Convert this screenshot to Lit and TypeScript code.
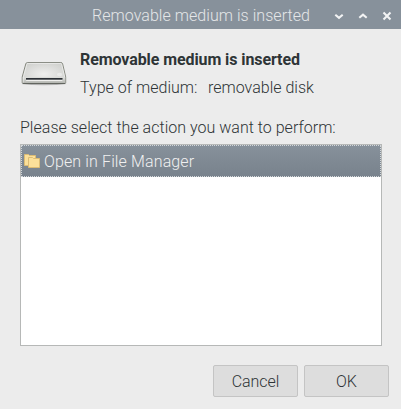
import { LitElement, html, css, svg } from "lit";
import { customElement } from "lit/decorators.js";

@customElement("drive-icon")
class DriveIcon extends LitElement {
  static styles = css`
    :host { display: block; width: 48px; height: 48px; }
    svg { display: block; }
  `;
  render() {
    return html`<svg width="48" height="48" viewBox="0 0 48 48">
      <defs>
        <radialGradient id="top" cx="0.5" cy="0.55" r="0.6">
          <stop offset="0" stop-color="#efefee" />
          <stop offset="1" stop-color="#d0d1ce" />
        </radialGradient>
        <linearGradient id="front" x1="0" y1="0" x2="0" y2="1">
          <stop offset="0" stop-color="#dfe0dd" />
          <stop offset="1" stop-color="#b4b6b1" />
        </linearGradient>
        <radialGradient id="shade">
          <stop offset="0.6" stop-color="#000" stop-opacity="0.25" />
          <stop offset="1" stop-color="#000" stop-opacity="0" />
        </radialGradient>
      </defs>
      <ellipse cx="24" cy="35" rx="24" ry="1.7" fill="url(#shade)" />
      <path d="M7.6 13.5H40.8Q42.2 13.5 42.6 14.8L45.7 28V33.5Q45.7 34.5 44.5 34.5H3.4Q2.2 34.5 2.2 33.5V28L5.8 14.8Q6.2 13.5 7.6 13.5Z" fill="url(#top)" stroke="#85887f" />
      <path d="M2.8 28H45.2V33.2Q45.2 34 44.1 34H3.9Q2.8 34 2.8 33.2Z" fill="url(#front)" />
      <path d="M6.8 15.2Q7.1 14.4 8 14.4H40.5Q41.4 14.4 41.7 15.4L44.8 28.2" fill="none" stroke="#fff" stroke-opacity="0.5" />
      <path d="M6.8 15.4L3.3 28.2V33.4" fill="none" stroke="#fff" stroke-opacity="0.45" />
      <ellipse cx="39.6" cy="25.5" rx="2.6" ry="1.8" fill="#fff" fill-opacity="0.4" />
      <path d="M6 29H42.4V31H6Z" fill="#777a7d" />
      <path d="M6 29H42.4V30.2H6Z" fill="#2c3035" />
      <path d="M6.2 31.5H42.3" stroke="#f0f0ee" stroke-width="1" />
      <path d="M2.8 34.5H45.2" stroke="#62655f" stroke-width="1" />
    </svg>`;
  }
}

@customElement("folders-icon")
class FoldersIcon extends LitElement {
  static styles = css`
    :host { display: block; width: 16px; height: 16px; }
    svg { display: block; }
  `;
  render() {
    return html`<svg width="16" height="16" viewBox="0 0 16 16" fill="#fbe09a" stroke="#dcbc74">
      <path d="M0.5 1.5H4.5L5.5 2.5H11.5V12.5H0.5Z" />
      <path d="M4.5 4.5H8.5L9.5 5.5H15.5V14.5H4.5Z" />
    </svg>`;
  }
}

const glyphs = {
  down: svg`<path d="M1.3 3.7L5 6.8L8.7 3.7" />`,
  up: svg`<path d="M1.3 6.8L5 3.7L8.7 6.8" />`,
  close: svg`<path d="M1.5 1.5L8.5 8.5M8.5 1.5L1.5 8.5" />`,
};

@customElement("app-root")
class AppRoot extends LitElement {
  static styles = css`
    :host {
      display: flex;
      flex-direction: column;
      box-sizing: border-box;
      width: 401px;
      height: 409px;
      background: #ececec;
      color: #2e3436;
      font: 300 16px/20px Roboto, "Liberation Sans", sans-serif;
      white-space: nowrap;
      overflow: hidden;
    }
    .titlebar {
      display: flex;
      align-items: center;
      height: 29px;
      box-sizing: border-box;
      padding: 2px 9px 0 92px;
      background: #87919b;
      color: #e4e6e8;
    }
    .title { flex: 1; letter-spacing: 0.05px; }
    .controls { display: flex; gap: 14px; }
    .controls svg { display: block; fill: none; stroke: #f2f3f4; stroke-width: 2.1; }
    .content { display: flex; flex-direction: column; flex: 1; padding: 20px 12px 12px 20px; }
    .summary { display: flex; gap: 12px; }
    .heading { margin-top: 1px; font-weight: 700; letter-spacing: -0.09px; }
    .detail { display: flex; gap: 10.5px; margin-top: 8px; letter-spacing: 0.02px; }
    .prompt { margin-top: 20px; letter-spacing: 0.02px; }
    .list {
      box-sizing: border-box;
      width: 362px;
      height: 202px;
      margin-top: 6px;
      border: 1px solid #b6b8b7;
      background: #fff;
    }
    .row {
      display: flex;
      align-items: center;
      gap: 4px;
      box-sizing: border-box;
      height: 32px;
      padding: 0 2px;
      border: 1px dotted #d3d7da;
      background: linear-gradient(#87919b, #78828c) border-box;
      color: #f0f0f0;
    }
    .row span { padding-top: 2px; letter-spacing: 0.13px; }
    .buttons { display: flex; justify-content: flex-end; gap: 6px; margin-top: 19px; }
    .button {
      width: 85px;
      height: 32px;
      padding: 2px 0 0;
      border: 1px solid #c4c4c4;
      border-radius: 2px;
      background: #dddddd;
      color: inherit;
      font: inherit;
      letter-spacing: -0.05px;
    }
  `;

  render() {
    return html`
      <div class="titlebar">
        <div class="title">Removable medium is inserted</div>
        <div class="controls">
          ${[glyphs.down, glyphs.up, glyphs.close].map(
            (g) => html`<svg width="10" height="10" viewBox="0 0 10 10">${g}</svg>`
          )}
        </div>
      </div>
      <div class="content">
        <div class="summary">
          <drive-icon></drive-icon>
          <div>
            <div class="heading">Removable medium is inserted</div>
            <div class="detail"><span>Type of medium:</span><span>removable disk</span></div>
          </div>
        </div>
        <div class="prompt">Please select the action you want to perform:</div>
        <div class="list">
          <div class="row"><folders-icon></folders-icon><span>Open in File Manager</span></div>
        </div>
        <div class="buttons">
          <button class="button">Cancel</button>
          <button class="button">OK</button>
        </div>
      </div>
    `;
  }
}
